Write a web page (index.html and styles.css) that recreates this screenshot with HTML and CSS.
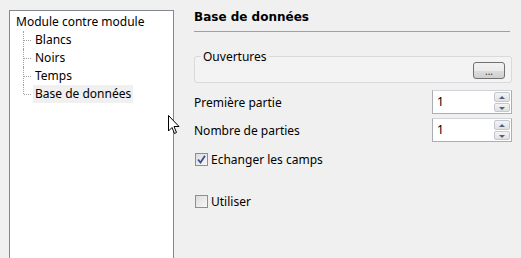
FILE: index.html
```html
<!DOCTYPE html>
<html lang="fr">
<head>
  <meta charset="UTF-8">
  <title>Options</title>
  <link rel="stylesheet" href="styles.css">
</head>
<body>
  <div class="dialog">
    <div class="tree">
      <div class="tree-root">Module contre module</div>
      <ul class="tree-children">
        <li><span class="node">Blancs</span></li>
        <li><span class="node">Noirs</span></li>
        <li><span class="node">Temps</span></li>
        <li class="last"><span class="node selected">Base de données</span></li>
      </ul>
    </div>
    <div class="page">
      <h2 class="page-title">Base de données</h2>
      <div class="group">
        <span class="group-title">Ouvertures</span>
        <div class="group-body">
          <button class="browse">...</button>
        </div>
      </div>
      <div class="field first">
        <label>Première partie</label>
        <div class="spin">
          <span class="spin-value">1</span>
          <div class="spin-buttons">
            <span class="spin-btn up"></span>
            <span class="spin-btn down"></span>
          </div>
        </div>
      </div>
      <div class="field">
        <label>Nombre de parties</label>
        <div class="spin">
          <span class="spin-value">1</span>
          <div class="spin-buttons">
            <span class="spin-btn up"></span>
            <span class="spin-btn down"></span>
          </div>
        </div>
      </div>
      <label class="check">
        <span class="box">
          <svg width="9" height="9" viewBox="0 0 9 9"><path d="M1 4.5 L3.5 7.5 L8 0.8" fill="none" stroke="#3b4f93" stroke-width="1.8"/></svg>
        </span>
        Echanger les camps
      </label>
      <label class="check utiliser">
        <span class="box"></span>
        Utiliser
      </label>
    </div>
  </div>
  <svg class="cursor" width="12" height="20" viewBox="0 0 12 20">
    <path d="M0.5 0.5 L0.5 16 L4 12.5 L6.5 18.5 L8.5 17.5 L6 11.5 L11 11.5 Z" fill="#fff" stroke="#000" stroke-width="1"/>
  </svg>
</body>
</html>
```

FILE: styles.css
```css
/* Base */
body {
  margin: 0;
  background: #f0f0f0;
  font-family: 'Noto Sans', 'Segoe UI', sans-serif;
  font-size: 12px;
  color: #000;
  overflow: hidden;
}

.dialog {
  display: flex;
  height: 258px;
  overflow: hidden;
}

/* Tree panel */
.tree {
  margin: 10px 0 0 9px;
  width: 163px;
  height: 260px;
  flex-shrink: 0;
  background: #fff;
  border: 1px solid #828790;
}

.tree-root {
  padding: 2px 0 0 6px;
  height: 18px;
  line-height: 18px;
}

.tree-children {
  list-style: none;
  margin: 0;
  padding: 0;
}

.tree-children li {
  position: relative;
  height: 18px;
  line-height: 18px;
  padding-left: 23px;
}

.tree-children li::before {
  content: '';
  position: absolute;
  left: 13px;
  top: 0;
  height: 18px;
  border-left: 1px dotted #a0a0a0;
}

.tree-children li.last::before {
  height: 9px;
}

.tree-children li::after {
  content: '';
  position: absolute;
  left: 14px;
  top: 9px;
  width: 7px;
  border-top: 1px dotted #a0a0a0;
}

.node {
  display: inline-block;
  padding: 0 2px;
}

.node.selected {
  background: #f0f0f0;
}

/* Right page */
.page {
  margin-left: 20px;
  width: 318px;
  padding-top: 9px;
}

.page-title {
  margin: 0;
  font-family: 'DejaVu Sans', sans-serif;
  font-size: 12px;
  font-weight: bold;
  height: 22px;
  line-height: 16px;
  border-bottom: 1px solid #a0a0a0;
  width: 316px;
}

.group {
  margin-top: 24px;
  height: 25px;
  border: 1px solid #d9d9d9;
  border-radius: 3px;
  background: #f3f3f3;
}

.group-title {
  display: block;
  width: fit-content;
  margin: -7px 0 0 6px;
  padding: 0 2px;
  line-height: 14px;
  background: #f0f0f0;
}

.group-body {
  display: flex;
  justify-content: flex-end;
  padding: 0 6px 0 0;
  margin-top: -2px;
}

.browse {
  width: 32px;
  height: 17px;
  padding: 0;
  border: 1px solid #707070;
  border-radius: 3px;
  background: linear-gradient(#f2f2f2, #ebebeb 50%, #dddddd 51%, #cfcfcf);
  font-family: inherit;
  font-size: 10px;
  line-height: 10px;
  color: #333;
}

.field {
  display: flex;
  justify-content: space-between;
  align-items: center;
  height: 24px;
  margin-top: 4px;
}

.field.first {
  margin-top: 7px;
}

.spin {
  display: flex;
  width: 78px;
  height: 22px;
  border: 1px solid #abadb3;
  border-top-color: #d0d3d8;
  background: #fff;
}

.spin-value {
  flex: 1;
  padding-left: 4px;
  line-height: 21px;
}

.spin-buttons {
  display: flex;
  flex-direction: column;
  width: 16px;
  padding: 1px 1px 1px 0;
  gap: 1px;
}

.spin-btn {
  flex: 1;
  position: relative;
  border: 1px solid #c3c7d0;
  border-radius: 2px;
  background: linear-gradient(#f4f4f4, #e0e0e0);
}

.spin-btn::after {
  content: '';
  position: absolute;
  left: 4px;
  top: 3px;
  border-left: 3px solid transparent;
  border-right: 3px solid transparent;
}

.spin-btn.up::after {
  border-bottom: 3px solid #4d6185;
}

.spin-btn.down::after {
  border-top: 3px solid #4d6185;
}

/* Checkboxes */
.check {
  display: flex;
  align-items: center;
  gap: 3px;
  height: 18px;
  margin-top: 8px;
  margin-left: 1px;
}

.check.utiliser {
  margin-top: 24px;
}

.box {
  width: 11px;
  height: 11px;
  border: 1px solid #8e8f8f;
  background: linear-gradient(135deg, #dcdcdc, #f8f8f8);
  display: flex;
  align-items: center;
  justify-content: center;
}

.cursor {
  position: absolute;
  left: 168px;
  top: 115px;
}
```
